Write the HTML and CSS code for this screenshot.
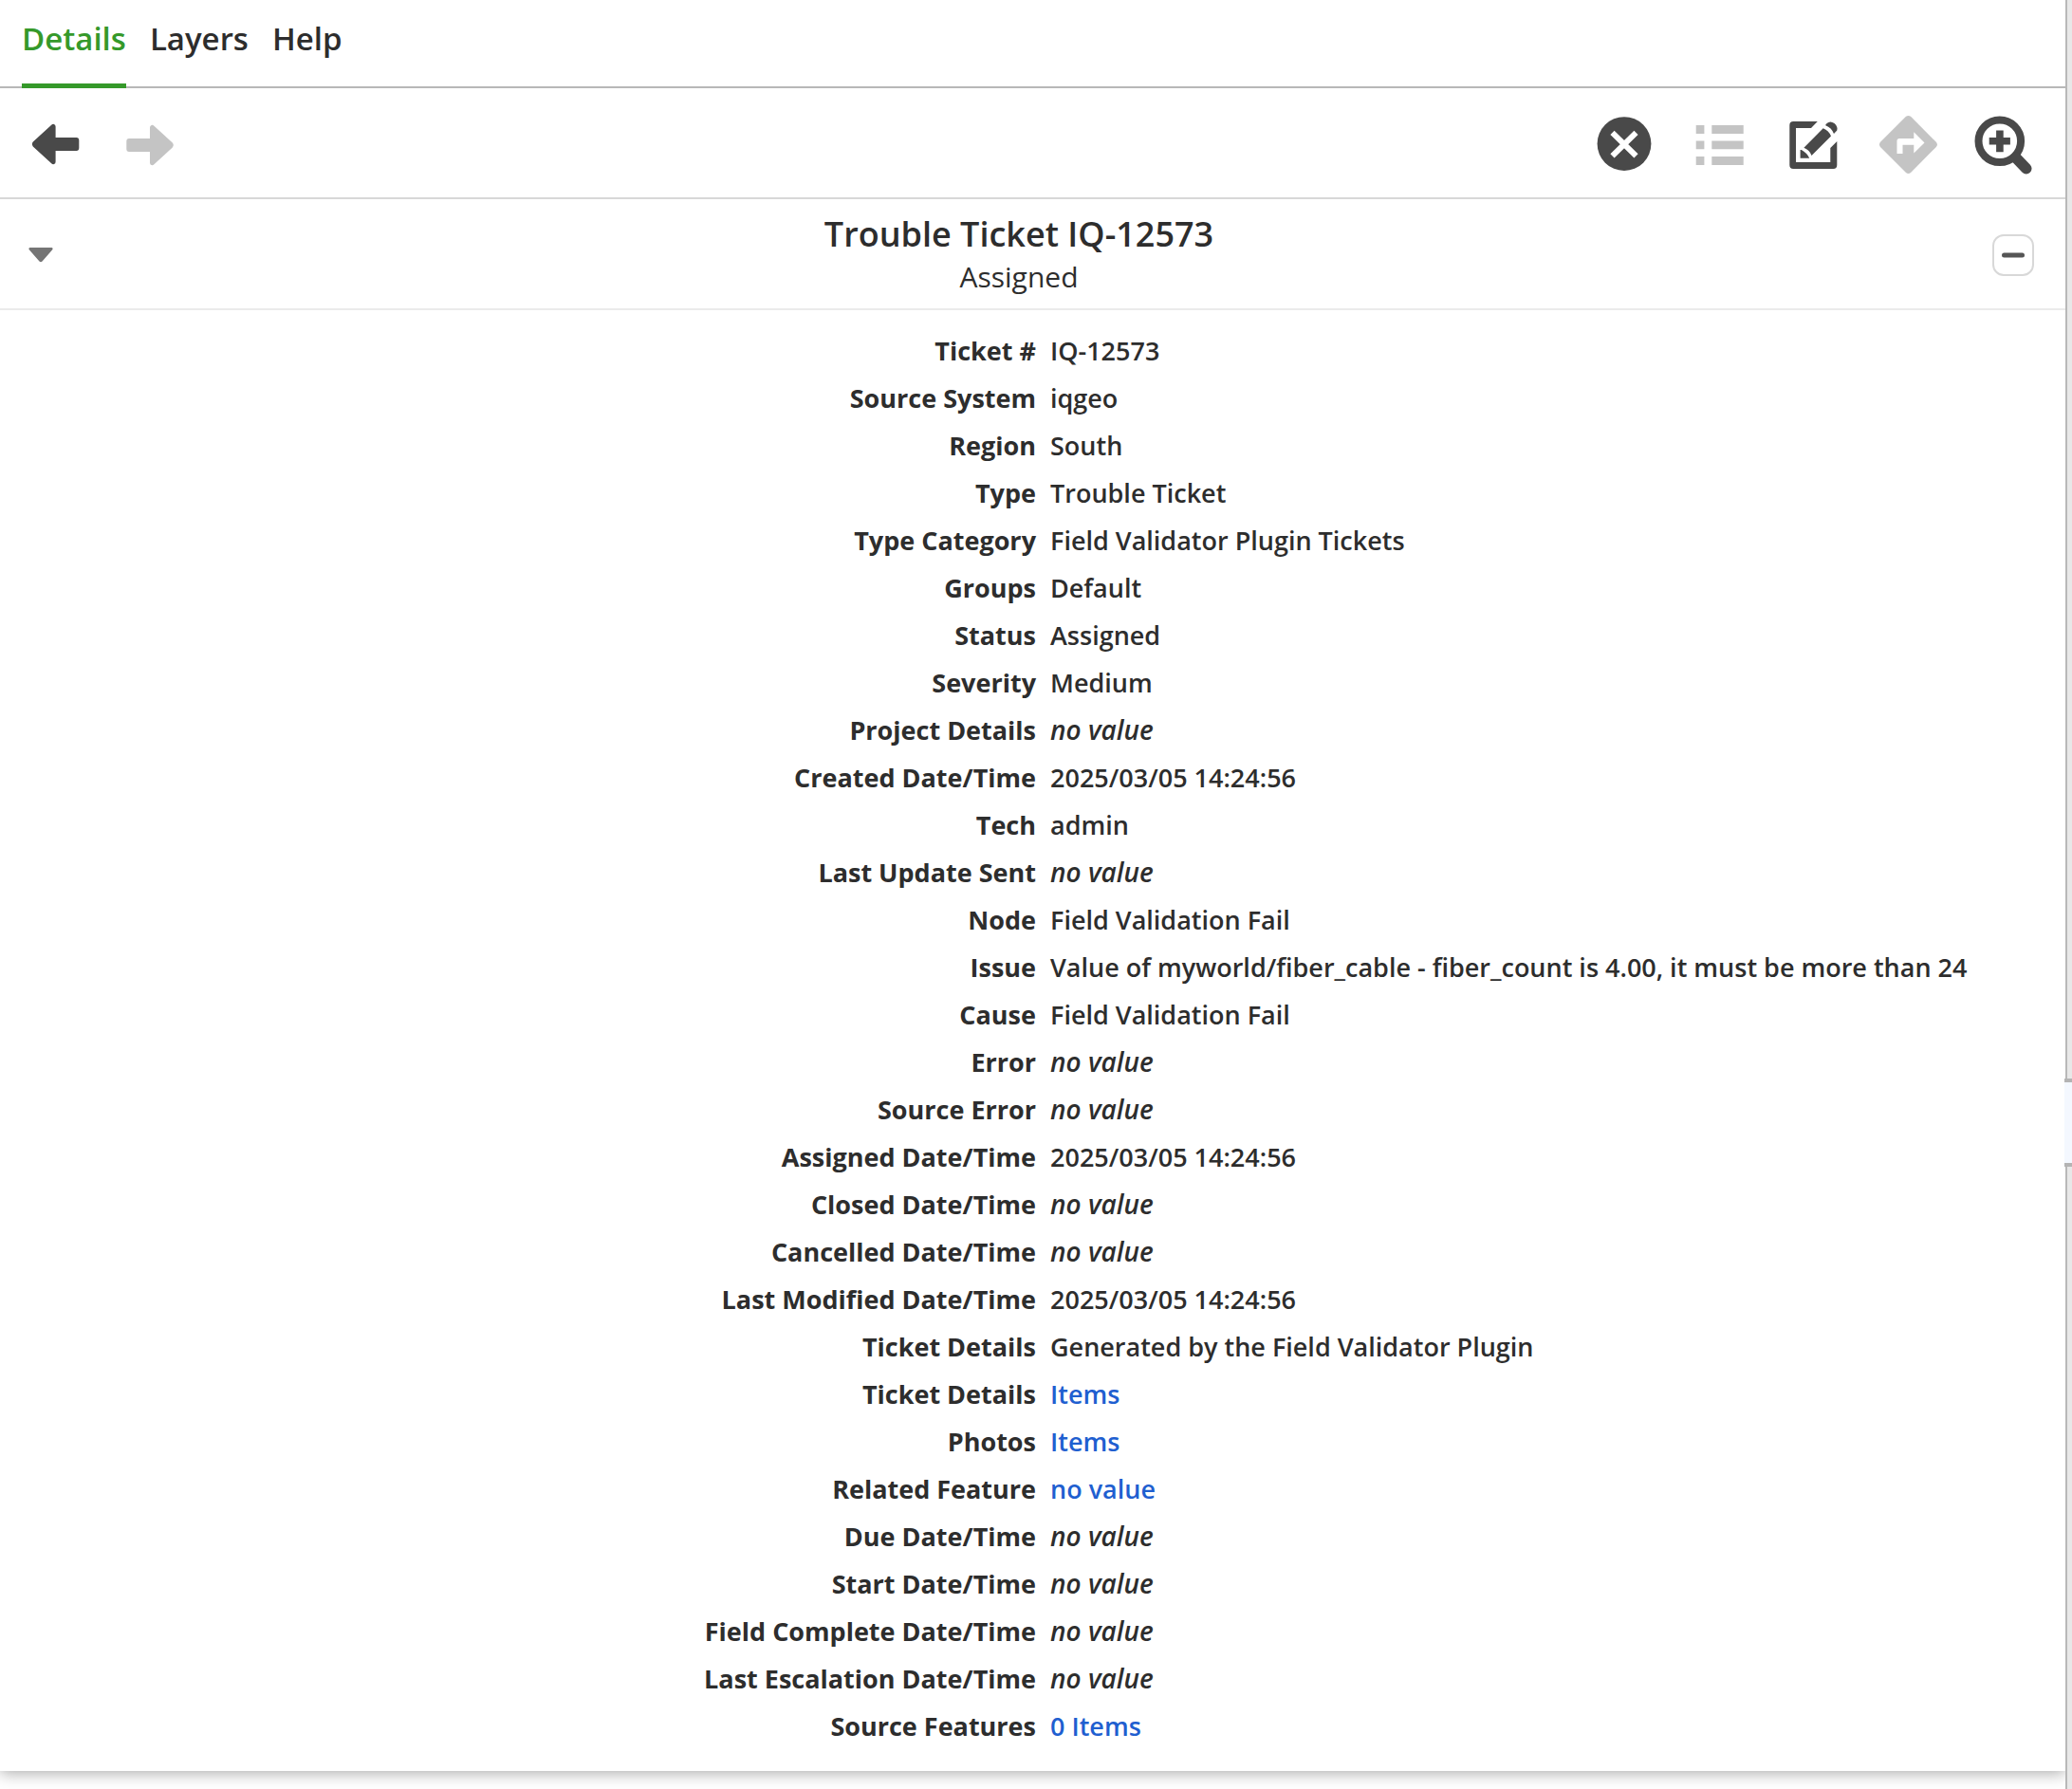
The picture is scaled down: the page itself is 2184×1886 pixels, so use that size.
FILE: index.html
```html
<!DOCTYPE html>
<html lang="en">
<head>
<meta charset="utf-8">
<meta name="viewport" content="width=device-width, initial-scale=1">
<title>Trouble Ticket IQ-12573</title>
<link rel="stylesheet" href="styles.css">
</head>
<body>
<div class="shell">
  <main class="sidebar">
    <nav class="tabs">
      <a class="tab tab-active" href="#details" aria-current="page">Details</a>
      <a class="tab" href="#layers">Layers</a>
      <a class="tab" href="#help">Help</a>
    </nav>
    <section class="panel">
      <div class="toolbar">
        <div class="tools">
          <button class="tool" type="button" aria-label="Back">
            <svg viewBox="0 0 64 64"><path d="M8.800 30.600 28.200 12.800Q29.500 11.500 31 12 32.600 12.500 32.600 14.600V26H54.500Q57.300 26 57.300 29V37Q57.300 40 54.500 40H32.600V51.400Q32.600 53.500 31 54 29.500 54.500 28.200 53.200L8.800 35.400Q6.800 33 8.800 30.600Z"/></svg>
          </button>
          <button class="tool" type="button" aria-label="Forward" disabled>
            <svg viewBox="0 0 64 64"><path d="M55.800 31.600 36.400 13.800Q35.100 12.500 33.600 13 32 13.500 32 15.600V27H10.100Q7.300 27 7.300 30V38Q7.300 41 10.100 41H32V52.400Q32 54.500 33.600 55 35.100 55.500 36.400 54.200L55.800 36.400Q57.800 34 55.800 31.600Z"/></svg>
          </button>
        </div>
        <div class="tools">
          <button class="tool" type="button" aria-label="Close">
            <svg viewBox="0 0 64 64"><circle cx="33" cy="32.600" r="28.400"/><path d="M20.500 20.800 45.500 45.300M45.500 20.800 20.500 45.300" fill="none" stroke="#fff" stroke-width="6"/></svg>
          </button>
          <button class="tool" type="button" aria-label="List" disabled>
            <svg viewBox="0 0 64 64"><path d="M8.700 13h8.700v9H8.700zM25.300 13h33.400v9H25.300zM8.700 29.600h8.700v8.600H8.700zM25.300 29.600h33.400v8.600H25.300zM8.700 46h8.700v9H8.700zM25.300 46h33.400v9H25.300z"/></svg>
          </button>
          <button class="tool" type="button" aria-label="Edit">
            <svg viewBox="0 0 64 64"><path d="M36.800 9H11.300Q7.300 9 7.300 13V55Q7.300 59 11.300 59H53.300Q57.300 59 57.300 55V30L50.300 37V52H14V16H30Z"/><path d="M42.700 16.300Q48.700 18.600 51 24.600L30.500 45Q28.500 39 22.400 36.700ZM19.800 39Q25.500 42 28.200 47.700H18.600V39ZM45.500 12Q49.500 7.500 54.500 11 58.500 14.500 57.300 18.500L54 22Q51.500 15.500 45.300 13.200Z"/></svg>
          </button>
          <button class="tool" type="button" aria-label="Directions" disabled>
            <svg viewBox="0 0 64 64"><path d="M30 3.800Q32.500 2 35 3.800L61.800 30.800Q64 33.500 61.800 36L35 63Q32.500 65 30 63L3 36Q1 33.500 3 30.800Z"/><path d="M20.500 43V29.500Q20.500 27 23 27H38.300V20.300L49.500 31.500 38.300 42.500V33.700H26.500V43Z" fill="#fff"/></svg>
          </button>
          <button class="tool" type="button" aria-label="Zoom to feature">
            <svg viewBox="0 0 64 64"><g fill="none" stroke="currentColor"><circle cx="28.800" cy="29.800" r="22.300" stroke-width="8"/><path d="M28.900 18.500V41.200M17.700 29.800H39.900" stroke-width="7.600"/><path d="M45.800 47.200 56.800 58.700" stroke-width="11.500" stroke-linecap="round"/></g></svg>
          </button>
        </div>
      </div>
      <header class="heading">
        <button class="disclosure" type="button" aria-label="Collapse ticket"><svg viewBox="0 0 26 16"><path d="M1.500 0H24.500Q26.500 1 25 2.600L14.500 14.500Q13 16 11.500 14.500L1 2.600Q-.5 1 1.500 0Z"/></svg></button>
        <div class="heading-text">
          <h1 class="title">Trouble Ticket IQ-12573</h1>
          <p class="subtitle">Assigned</p>
        </div>
        <button class="minimise" type="button" aria-label="Minimise"><svg viewBox="0 0 24 6"><rect width="24" height="5" y=".5" rx="2.500"/></svg></button>
      </header>
      <table class="fields">
        <tbody>
          <tr><th scope="row">Ticket #</th><td>IQ-12573</td></tr>
          <tr><th scope="row">Source System</th><td>iqgeo</td></tr>
          <tr><th scope="row">Region</th><td>South</td></tr>
          <tr><th scope="row">Type</th><td>Trouble Ticket</td></tr>
          <tr><th scope="row">Type Category</th><td>Field Validator Plugin Tickets</td></tr>
          <tr><th scope="row">Groups</th><td>Default</td></tr>
          <tr><th scope="row">Status</th><td>Assigned</td></tr>
          <tr><th scope="row">Severity</th><td>Medium</td></tr>
          <tr><th scope="row">Project Details</th><td><em>no value</em></td></tr>
          <tr><th scope="row">Created Date/Time</th><td>2025/03/05 14:24:56</td></tr>
          <tr><th scope="row">Tech</th><td>admin</td></tr>
          <tr><th scope="row">Last Update Sent</th><td><em>no value</em></td></tr>
          <tr><th scope="row">Node</th><td>Field Validation Fail</td></tr>
          <tr><th scope="row">Issue</th><td>Value of myworld/fiber_cable - fiber_count is 4.00, it must be more than 24</td></tr>
          <tr><th scope="row">Cause</th><td>Field Validation Fail</td></tr>
          <tr><th scope="row">Error</th><td><em>no value</em></td></tr>
          <tr><th scope="row">Source Error</th><td><em>no value</em></td></tr>
          <tr><th scope="row">Assigned Date/Time</th><td>2025/03/05 14:24:56</td></tr>
          <tr><th scope="row">Closed Date/Time</th><td><em>no value</em></td></tr>
          <tr><th scope="row">Cancelled Date/Time</th><td><em>no value</em></td></tr>
          <tr><th scope="row">Last Modified Date/Time</th><td>2025/03/05 14:24:56</td></tr>
          <tr><th scope="row">Ticket Details</th><td>Generated by the Field Validator Plugin</td></tr>
          <tr><th scope="row">Ticket Details</th><td><a href="#ticket-items">Items</a></td></tr>
          <tr><th scope="row">Photos</th><td><a href="#photos">Items</a></td></tr>
          <tr><th scope="row">Related Feature</th><td><a href="#related">no value</a></td></tr>
          <tr><th scope="row">Due Date/Time</th><td><em>no value</em></td></tr>
          <tr><th scope="row">Start Date/Time</th><td><em>no value</em></td></tr>
          <tr><th scope="row">Field Complete Date/Time</th><td><em>no value</em></td></tr>
          <tr><th scope="row">Last Escalation Date/Time</th><td><em>no value</em></td></tr>
          <tr><th scope="row">Source Features</th><td><a href="#source-features">0 Items</a></td></tr>
        </tbody>
      </table>
    </section>
  </main>
  <div class="map-edge"><button class="handle" type="button" aria-label="Toggle sidebar"></button></div>
</div>
</body>
</html>
```
FILE: styles.css
```css
* {
  box-sizing: border-box;
}

body {
  margin: 0;
  background: #fff;
  color: #2d2d2d;
  font: 600 27px/50px "Open Sans", "Noto Sans", sans-serif;
}

button {
  margin: 0;
  padding: 0;
  border: 0;
  background: none;
  color: inherit;
  font: inherit;
}

svg {
  display: block;
  fill: currentColor;
}

.shell {
  display: flex;
  min-height: 100vh;
}

.sidebar {
  flex: 1;
  min-width: 0;
  overflow: hidden;
}

/* Tabs */
.tabs {
  display: flex;
  gap: 25px;
  padding: 0 23px;
  border-bottom: 2px solid #b8b8b8;
}

.tab {
  height: 93px;
  margin-bottom: -2px;
  border-bottom: 5px solid transparent;
  color: inherit;
  font-size: 33px;
  line-height: 82px;
  text-decoration: none;
}

.tab-active {
  border-color: #35992a;
  color: #35992a;
}

/* Toolbar */
.panel {
  background: #fff;
  box-shadow: 0 2px 16px rgba(0, 0, 0, 0.35);
  clip-path: inset(0 0 -30px 0);
}

.toolbar {
  display: flex;
  justify-content: space-between;
  padding: 26px 16px 25px 8px;
  border-bottom: 2px solid #d8d8d8;
}

.tools {
  display: flex;
}

.tool {
  display: flex;
  justify-content: center;
  width: 100px;
  color: #494949;
}

.tool:disabled {
  color: #c4c4c4;
}

.tool svg {
  width: 64px;
  height: 64px;
  overflow: visible;
}

/* Ticket heading */
.heading {
  display: flex;
  align-items: center;
  height: 117px;
  padding: 2px 33px 0 30px;
  border-bottom: 2px solid #ebebeb;
}

.disclosure {
  color: #757575;
}

.disclosure svg {
  width: 26px;
  height: 16px;
}

.heading-text {
  flex: 1;
  padding: 0 8px 2px 0;
  text-align: center;
}

.title {
  margin: 0;
  font-size: 36px;
  font-weight: 600;
  line-height: 48px;
}

.subtitle {
  margin: 0;
  font-size: 30px;
  font-weight: 400;
  line-height: 42px;
}

.minimise {
  display: grid;
  place-items: center;
  width: 44px;
  height: 44px;
  border: 2px solid #d8d8d8;
  border-radius: 12px;
  color: #555;
}

.minimise svg {
  width: 24px;
  height: 6px;
}

/* Ticket fields */
.fields {
  width: 100%;
  padding: 18px 0 22px 23px;
  border-spacing: 0;
  table-layout: fixed;
}

.fields th,
.fields td {
  height: 50px;
  padding: 0 8px;
}

.fields th {
  font-weight: 700;
  text-align: right;
}

.fields td {
  padding-left: 7px;
}

.fields em {
  font-size: 28px;
  line-height: 48px;
}

.fields a {
  color: #1f5fd0;
  text-decoration: none;
}

/* Strip of map beside the sidebar, with the sidebar handle */
.map-edge {
  width: 7px;
  border-left: 2px solid #b8b8b8;
  background: #e8e8e8;
}

.handle {
  position: absolute;
  right: 0;
  top: 1137px;
  width: 8px;
  height: 93px;
  border: solid #b4b4b4;
  border-width: 4px 0;
  background: #f4f8ff;
}
```
